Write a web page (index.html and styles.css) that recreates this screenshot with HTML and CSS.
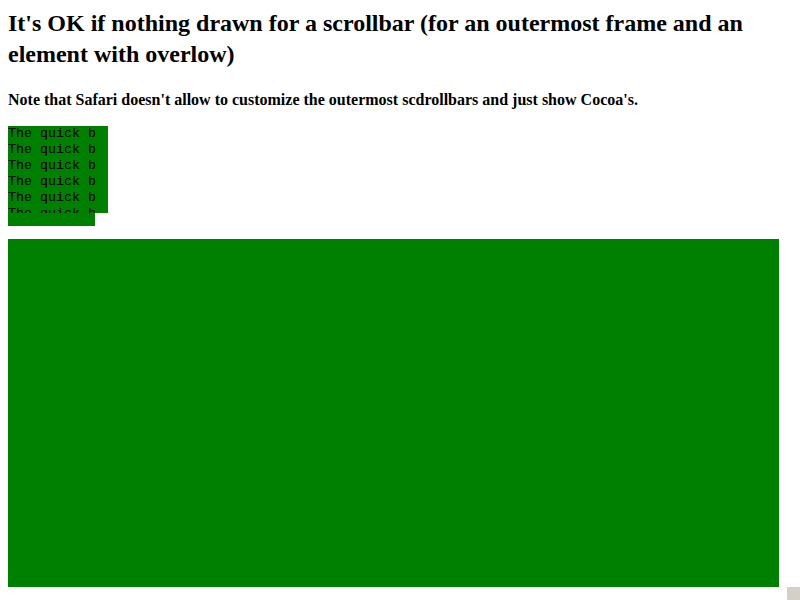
FILE: index.html
```html
<!DOCTYPE html>
<html>
<head>
<meta charset="utf-8">
<link rel="stylesheet" href="styles.css">
</head>
<body>
<div class="viewport">
  <h2 class="title">It's OK if nothing drawn for a scrollbar (for an outermost frame and an element with overlow)</h2>
  <h4 class="note">Note that Safari doesn't allow to customize the outermost scdrollbars and just show Cocoa's.</h4>
  <div class="scroller">
    <div class="scroller-content">
      <div>The quick brown fox jumps over the lazy dog.</div>
      <div>The quick brown fox jumps over the lazy dog.</div>
      <div>The quick brown fox jumps over the lazy dog.</div>
      <div>The quick brown fox jumps over the lazy dog.</div>
      <div>The quick brown fox jumps over the lazy dog.</div>
      <div>The quick brown fox jumps over the lazy dog.</div>
      <div>The quick brown fox jumps over the lazy dog.</div>
      <div>The quick brown fox jumps over the lazy dog.</div>
    </div>
    <div class="scroller-vbar"></div>
    <div class="scroller-hbar"></div>
    <div class="scroller-corner"></div>
  </div>
  <div class="big-box"></div>
</div>
<div class="scroll-corner"></div>
</body>
</html>
```
FILE: styles.css
```css
html, body {
  margin: 0;
  padding: 0;
  background: #ffffff;
}
body {
  width: 800px;
  height: 600px;
  overflow: hidden;
  position: relative;
  font-family: "Liberation Serif", "Times New Roman", serif;
  color: #000000;
}
.viewport {
  width: 787px;
  height: 587px;
  box-sizing: border-box;
  padding: 8px 8px 0 8px;
  overflow: hidden;
}
.title {
  margin: 0 0 21px 0;
  font-size: 24px;
  line-height: 31px;
  font-weight: bold;
}
.note {
  margin: 0 0 17px 0;
  font-size: 16px;
  line-height: 18px;
  font-weight: bold;
}
.scroller {
  width: 100px;
  height: 100px;
  display: grid;
  grid-template-columns: 87px 13px;
  grid-template-rows: 87px 13px;
  background: #008000;
}
.scroller-content {
  overflow: hidden;
  font-family: "Liberation Mono", "Courier New", monospace;
  font-size: 13.33px;
  line-height: 16px;
  white-space: nowrap;
  color: #000000;
}
.scroller-corner {
  background: #ffffff;
}
.big-box {
  margin-top: 13px;
  width: 771px;
  height: 600px;
  background: #008000;
}
.scroll-corner {
  position: absolute;
  right: 0;
  bottom: 0;
  width: 13px;
  height: 13px;
  background: #d4d0c8;
}
```
